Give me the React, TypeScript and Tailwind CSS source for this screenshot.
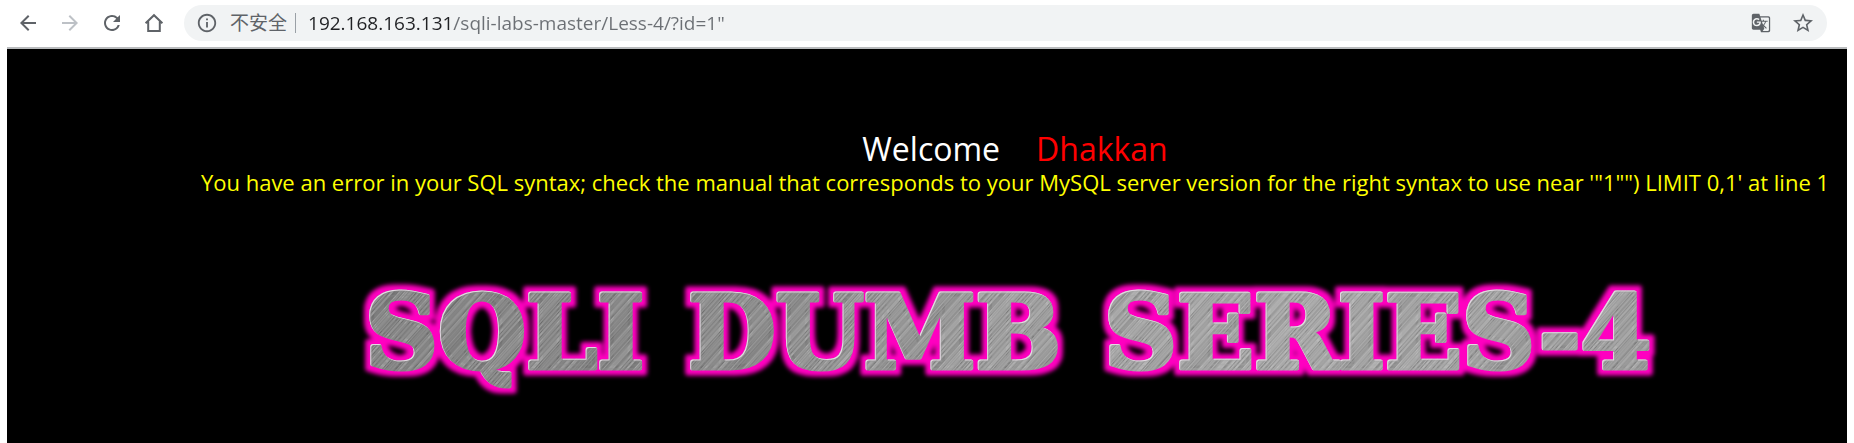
import React from "react";
import {
  MdArrowBack,
  MdArrowForward,
  MdGTranslate,
  MdInfoOutline,
  MdRefresh,
  MdStarBorder,
} from "react-icons/md";

function HomeIcon() {
  return (
    <svg viewBox="0 0 24 24" className="size-6" fill="none" stroke="currentColor" strokeWidth="2">
      <path d="M3.6 12.2 12 4.2l8.4 8M6.2 10.5V20h11.6v-9.5" />
    </svg>
  );
}

function Toolbar() {
  return (
    <header className="flex items-center border-b-2 border-[#b9bbbd] bg-white pt-[5px] pr-5 pb-[6px] pl-[9px] text-[#5f6368]">
      <nav className="flex gap-[18px]">
        <button aria-label="Back"><MdArrowBack className="size-6" /></button>
        <button aria-label="Forward" className="text-[#bdc1c6]"><MdArrowForward className="size-6" /></button>
        <button aria-label="Reload"><MdRefresh className="size-6" /></button>
        <button aria-label="Home"><HomeIcon /></button>
      </nav>
      <div className="ml-[18px] flex h-9 flex-1 items-center rounded-full bg-[#f1f3f4] pr-3 pl-3">
        <button className="flex items-center gap-3 text-[19px] leading-6">
          <MdInfoOutline className="size-[22px]" />
          <span>不安全</span>
        </button>
        <span className="mx-2 h-5 w-px bg-[#9aa0a6]" />
        <input
          aria-label="Address"
          spellCheck={false}
          defaultValue={'192.168.163.131/sqli-labs-master/Less-4/?id=1"'}
          className="ml-1 min-w-0 flex-1 bg-linear-to-r from-[#202124] from-[144px] to-[#6b6f74] to-[144px] bg-clip-text text-[19px] leading-6 text-transparent outline-none"
        />
        <button aria-label="Translate this page"><MdGTranslate className="size-5" /></button>
        <button aria-label="Bookmark this page" className="ml-5"><MdStarBorder className="size-6" /></button>
      </div>
    </header>
  );
}

// Fine scratches of uneven strength, repeated as brushed steel.
const TILE = 113;
const scratches = Array.from({ length: TILE }, (_, i) => {
  const n = Math.sin(i * 12.9898 + 4.1) * 43758.5453;
  return n - Math.floor(n);
});

function Banner() {
  return (
    <svg
      viewBox="0 0 1350 130"
      className="h-[130px] w-[1350px] max-w-full"
      role="img"
      aria-label="SQLI DUMB SERIES-4"
    >
      <defs>
        <linearGradient id="steel" x1="0" x2="1350" y1="0" y2="0" gradientUnits="userSpaceOnUse">
          <stop offset="0" stopColor="#858585" />
          <stop offset="0.3" stopColor="#8e8e8e" />
          <stop offset="0.45" stopColor="#9c9c9c" />
          <stop offset="0.7" stopColor="#a8a8a8" />
          <stop offset="1" stopColor="#9c9c9c" />
        </linearGradient>
        <filter id="metal" x="0" y="0" width="1350" height="130" filterUnits="userSpaceOnUse" colorInterpolationFilters="sRGB">
          <feMorphology in="SourceAlpha" operator="dilate" radius="5" result="wide" />
          <feGaussianBlur in="wide" stdDeviation="2" result="soft" />
          <feFlood floodColor="#ff00c0" />
          <feComposite in2="soft" operator="in" result="glow" />
          <feOffset in="SourceAlpha" dx="1" dy="1" result="shifted" />
          <feComposite in="SourceAlpha" in2="shifted" operator="out" result="edge" />
          <feFlood floodColor="#e4d8e2" />
          <feComposite in2="edge" operator="in" result="highlight" />
          <feMerge>
            <feMergeNode in="glow" />
            <feMergeNode in="SourceGraphic" />
            <feMergeNode in="highlight" />
          </feMerge>
        </filter>
        <pattern id="brushed" width={TILE} height={TILE} patternUnits="userSpaceOnUse" patternTransform="rotate(42)">
          {scratches.map((s, i) => (
            <rect
              key={i}
              x={i}
              width="1"
              height={TILE}
              fill={s > 0.5 ? "#fff" : "#000"}
              fillOpacity={Math.abs(s - 0.5) * 0.25}
            />
          ))}
        </pattern>
        <g id="words" fontFamily="'DejaVu Serif', serif" fontWeight="700" fontSize="101" strokeWidth="5" strokeLinejoin="round">
          <text x="25" y="96">SQLI</text>
          <text x="348" y="96">DUMB</text>
          <text x="764" y="96">SERIES-4</text>
        </g>
      </defs>
      <g filter="url(#metal)">
        <use href="#words" fill="url(#steel)" stroke="url(#steel)" />
        <use href="#words" fill="url(#brushed)" stroke="url(#brushed)" />
      </g>
    </svg>
  );
}

export default function App() {
  return (
    <div className="bg-white pr-[7px] pl-[7px] font-['Open_Sans','Noto_Sans_CJK_SC',sans-serif]">
      <Toolbar />
      <main className="flex min-h-[394px] flex-col items-center bg-black pt-20 pl-[176px]">
        <h1 className="flex gap-9 text-[32px] leading-10 text-white">
          Welcome <span className="text-[#ff0000]">Dhakkan</span>
        </h1>
        <p className="text-[22px] leading-[26px] whitespace-nowrap text-[#ffff00]">
          You have an error in your SQL syntax; check the manual that corresponds to your MySQL server version for the right syntax to use near '"1"") LIMIT 0,1' at line 1
        </p>
        <div className="mt-[77px]">
          <Banner />
        </div>
      </main>
    </div>
  );
}
